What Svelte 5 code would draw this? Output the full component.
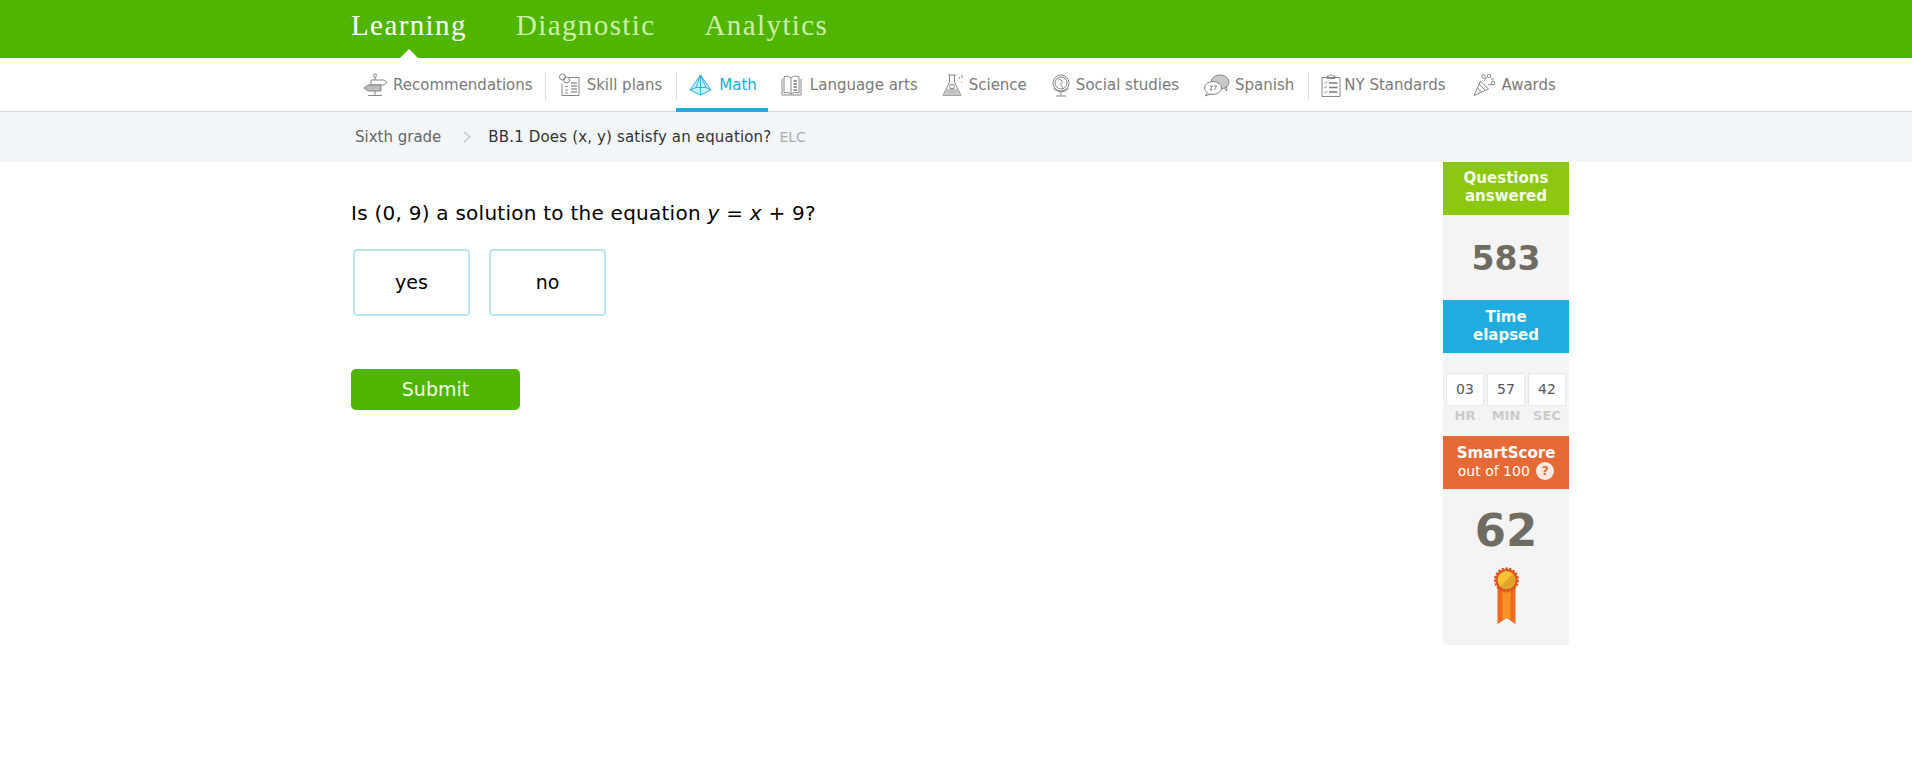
<script lang="ts">
	const tabs = [
		{ label: 'Learning', active: true },
		{ label: 'Diagnostic', active: false },
		{ label: 'Analytics', active: false }
	];

	const subjects = [
		{ id: 'rec', label: 'Recommendations', w: 26, divider: true },
		{ id: 'plans', label: 'Skill plans', w: 22, divider: true },
		{ id: 'math', label: 'Math', w: 23, active: true },
		{ id: 'lang', label: 'Language arts', w: 23 },
		{ id: 'sci', label: 'Science', w: 22 },
		{ id: 'soc', label: 'Social studies', w: 20 },
		{ id: 'spa', label: 'Spanish', w: 27, divider: true },
		{ id: 'ny', label: 'NY Standards', w: 20 },
		{ id: 'awd', label: 'Awards', w: 23 }
	];

	const timer = [
		{ value: '03', unit: 'HR' },
		{ value: '57', unit: 'MIN' },
		{ value: '42', unit: 'SEC' }
	];
</script>

{#snippet icon(id: string, w: number)}
	<svg class="icon" width={w} height="24" viewBox="0 0 {w} 24" fill="none" stroke="currentColor" stroke-width="0.9">
		{#if id === 'rec'}
			<circle cx="13" cy="2.5" r="1.6" />
			<path d="M13 4v3M13 17v5M6 22.5h14" />
			<path d="M9 7h13l3 2.5-3 2.5H9z" />
			<path d="M19 12H6l-4 3 4 3h13z" fill="#bdbdbd" />
		{:else if id === 'plans'}
			<circle cx="4.5" cy="4" r="3" />
			<circle cx="8.5" cy="7" r="3" />
			<path d="M11 4.500h10v18H4V11" />
			<path d="M7 13.500h3M7 17h3M7 20h3" />
			<path d="M13 10h6M13 13h6M13 16h6M13 19h6" stroke="#999" stroke-width="1.500" />
		{:else if id === 'math'}
			<path d="M11.500 2 22 17 11.500 22 1 17z" fill="#c9ecf8" />
			<path d="M11.500 2 11.500 22M11.500 2 7 14.500 1 17M7 14.500 17 14.500 22 17M11.500 2 17 14.500" />
		{:else if id === 'lang'}
			<path d="M2 6v16h19V6" />
			<path d="M4 4v16c3-1 5-.5 7 1V5C9 3 7 2.500 4 4z" />
			<path d="M11 5c2-2 5-2.500 8-1v16c-3-1-6-.5-8 1" />
			<path d="M13.500 8h3.500M13.500 11h3.500M13.500 14h3.500M13.500 17h3.500" stroke-width="1.300" />
		{:else if id === 'sci'}
			<path d="M6 2h8M7.500 2v7L1 22.500h18L12.500 9V2" />
			<path d="M4.500 16c3-1 8-1 11 0l3.500 6.500H1z" fill="#c4c4c4" stroke="none" />
			<circle cx="10" cy="13.500" r="2.300" />
			<path d="M17 4l1 2M20 2v3M19 9h1" />
		{:else if id === 'soc'}
			<circle cx="10" cy="10" r="8" />
			<circle cx="10" cy="10" r="6" />
			<path d="M6 5c1 2 4 1 5 3s-2 2-1 4 2 2 2 4M12 4c1 1 2 2 3 2" fill="none" />
			<path d="M2.500 15c3 5 12 5 15 0M10 19v3.500M5 23h10" />
		{:else if id === 'spa'}
			<ellipse cx="17" cy="9" rx="9" ry="7" fill="#c9c9c9" />
			<path d="M21 15l3 3-.5-5" />
			<ellipse cx="10" cy="15" rx="8.500" ry="6.500" fill="#fff" />
			<path d="M4 20l-1.500 3 5-2" fill="#fff" />
			<path d="M7 13h2.500L7 17h2.500M11 13h2.500L11.500 17" stroke-width=".9" />
		{:else if id === 'ny'}
			<path d="M1 4.500h18v19H1z" />
			<path d="M6 4.500V3h2.500l1.500-1.500 1.500 1.500H14v2.500H6z" />
			<path d="M3.500 9.500l1 1 1.500-2M3.500 14l1 1 1.500-2M3.500 19l1 1 1.500-2" stroke="#888" />
			<path d="M8 10h8.500M8 14.500h8.500M8 19h8.500" stroke-width="1.300" />
		{:else if id === 'awd'}
			<path d="M1 22.500 7.500 8l8 8z" />
			<path d="M4.500 15l4 4M6 11l6.500 6.500" />
			<circle cx="10.500" cy="3.500" r="1.800" />
			<circle cx="16" cy="3" r="1.800" />
			<circle cx="20" cy="10" r="1.800" />
			<path d="M11 8c2-1 1-3 3-3M15 12c2-1 3-1 4 .5M18 6h3" />
		{/if}
	</svg>
{/snippet}

<div class="page">
	<header class="topbar">
		<nav class="wrap tabs">
			{#each tabs as tab}
				<a class="tab" class:on={tab.active} href="#top">{tab.label}</a>
			{/each}
		</nav>
	</header>

	<nav class="subnav">
		<div class="wrap subjects">
			{#each subjects as s}
				<a class="subject subject-{s.id}" class:active={s.active} class:divided={s.divider} href="#top">
					{@render icon(s.id, s.w)}
					<span>{s.label}</span>
				</a>
			{/each}
		</div>
	</nav>

	<div class="crumbs">
		<div class="wrap crumb-row">
			<span class="crumb-grade">Sixth grade</span>
			<svg class="chevron" width="8" height="12" viewBox="0 0 8 12" fill="none" stroke="#bcc2c6" stroke-width="1.300"><path d="M1 1l6 5-6 5" /></svg>
			<span class="crumb-skill">BB.1 Does (x, y) satisfy an equation?</span>
			<span class="crumb-code">ELC</span>
		</div>
	</div>

	<main class="wrap content">
		<section class="question">
			<p class="prompt">Is (0, 9) a solution to the equation <i>y</i> = <i>x</i> + 9?</p>
			<div class="choices">
				<button class="choice">yes</button>
				<button class="choice">no</button>
			</div>
			<button class="submit">Submit</button>
		</section>

		<aside class="stats">
			<h2 class="stat-head green">Questions<br />answered</h2>
			<div class="count">583</div>
			<h2 class="stat-head blue">Time<br />elapsed</h2>
			<div class="timer">
				{#each timer as t}
					<div class="cell">
						<div class="digits">{t.value}</div>
						<div class="unit">{t.unit}</div>
					</div>
				{/each}
			</div>
			<h2 class="stat-head orange">
				SmartScore
				<span class="outof">out of 100 <span class="help">?</span></span>
			</h2>
			<div class="score">62</div>
			<div class="ribbon">
				<svg width="27" height="57" viewBox="0 0 27 57">
					<path d="M4.500 18h18v39l-9-6-9 6z" fill="#ee6a1f" />
					<path d="M9.500 18h8v35l-4-2.500-4 2.500z" fill="#f79226" />
					<circle cx="13.500" cy="13" r="11" fill="#d9541e" stroke="#d9541e" stroke-width="3" stroke-dasharray="2.300 1.300" />
					<circle cx="13.500" cy="13" r="9" fill="#f6c333" />
					<path d="M20 7a9 9 0 0 1-13 12.500z" fill="#e2a32c" />
				</svg>
			</div>
		</aside>
	</main>
</div>

<style>
	:global(body) {
		background: #fff;
	}

	.page {
		font-family: 'DejaVu Sans', Verdana, sans-serif;
		color: #000;
	}

	.wrap {
		box-sizing: border-box;
		width: 1226px;
		margin: 0 auto;
		padding-left: 8px;
	}

	.topbar {
		height: 58px;
		background: #50b500;
	}

	.tabs {
		display: flex;
		gap: 49px;
	}

	.tab {
		position: relative;
		height: 58px;
		line-height: 50px;
		font-family: 'Liberation Serif', serif;
		font-size: 29px;
		letter-spacing: 1.4px;
		color: #cdf0a8;
		text-decoration: none;
	}

	.tab.on {
		color: #fff;
	}

	.tab.on::after {
		content: '';
		position: absolute;
		left: 50%;
		bottom: 0;
		margin-left: -9px;
		border: 9px solid transparent;
		border-top: 0;
		border-bottom-color: #fff;
	}

	.subnav {
		height: 53px;
		border-bottom: 1px solid #d4d9dc;
		background: #fff;
	}

	.subjects {
		display: flex;
		padding-left: 19px;
	}

	.subject {
		position: relative;
		flex: none;
		display: flex;
		align-items: center;
		gap: 5px;
		height: 53px;
		font-size: 15px;
		white-space: nowrap;
		color: #7a7a7a;
		text-decoration: none;
		box-sizing: border-box;
		padding-right: 25px;
	}

	.subject.divided::after {
		content: '';
		position: absolute;
		right: 12px;
		top: 14px;
		height: 28px;
		width: 1px;
		background: #dcdcdc;
	}

	.subject.active {
		margin-left: -13px;
		padding: 0 11px 0 13px;
		margin-right: 14px;
		gap: 7px;
		color: #20abdc;
		border-bottom: 4px solid #20abdc;
		height: 54px;
	}

	.subject.active span,
	.subject.active .icon {
		margin-top: 4px;
	}

	.subject-plans {
		padding-right: 27px;
	}

	.subject-plans span {
		margin-left: 2px;
	}

	.subject-lang {
		margin-left: -2px;
		gap: 7px;
		padding-right: 24px;
	}

	.subject-sci,
	.subject-soc {
		padding-right: 24px;
	}

	.subject-spa {
		padding-right: 27px;
	}

	.subject-ny {
		gap: 3px;
		padding-right: 27px;
	}

	.subject-awd {
		gap: 6px;
	}

	.icon {
		flex: none;
	}

	.crumbs {
		height: 50px;
		background: #f3f6f9;
	}

	.crumb-row {
		display: flex;
		align-items: center;
		height: 50px;
		padding-left: 12px;
		font-size: 15px;
	}

	.crumb-grade {
		color: #666;
	}

	.chevron {
		margin: 0 17px 0 22px;
	}

	.crumb-skill {
		color: #333;
		letter-spacing: 0.16px;
	}

	.crumb-code {
		margin-left: 8px;
		font-size: 14px;
		color: #a9adb0;
	}

	.content {
		display: flex;
		justify-content: space-between;
		align-items: flex-start;
	}

	.prompt {
		margin: 38px 0 0;
		font-size: 20px;
		line-height: 26px;
		letter-spacing: 0.25px;
	}

	.choices {
		display: flex;
		gap: 19px;
		margin: 23px 0 0 2px;
	}

	.choice {
		width: 117px;
		height: 67px;
		padding: 0 0 2px;
		background: #fff;
		border: 2px solid #b8e6f1;
		border-radius: 4px;
		font: inherit;
		font-size: 19px;
		color: #000;
	}

	.submit {
		display: block;
		width: 169px;
		height: 41px;
		margin-top: 53px;
		padding: 0 0 2px;
		border: 0;
		border-radius: 5px;
		background: #50b500;
		font: inherit;
		font-size: 19px;
		color: #f1fbe6;
	}

	.stats {
		width: 126px;
		height: 483px;
		background: #f4f4f4;
		text-align: center;
	}

	.stat-head {
		margin: 0;
		font-size: 15px;
		line-height: 18px;
		font-weight: bold;
		color: #f4fbe9;
		padding: 7px 0;
		height: 53px;
		box-sizing: border-box;
	}

	.green {
		background: #8cc812;
	}

	.blue {
		background: #20abe1;
		padding-top: 8px;
	}

	.orange {
		background: #e56a35;
		color: #fff;
		font-size: 15px;
		padding-top: 8px;
	}

	.outof {
		display: block;
		font-weight: normal;
		font-size: 14px;
	}

	.help {
		display: inline-block;
		width: 18px;
		height: 18px;
		line-height: 18px;
		margin-left: 2px;
		border-radius: 50%;
		background: #fbe9e1;
		color: #e56a35;
		font-size: 12px;
		font-weight: bold;
		vertical-align: 1px;
	}

	.count {
		height: 85px;
		line-height: 87px;
		font-size: 33px;
		font-weight: bold;
		color: #6f6d63;
	}

	.timer {
		display: flex;
		justify-content: center;
		gap: 3px;
		height: 83px;
		padding-top: 20px;
		box-sizing: border-box;
	}

	.digits {
		box-sizing: border-box;
		width: 38px;
		height: 33px;
		line-height: 31px;
		background: #fff;
		border: 1px solid #e8e8e8;
		font-size: 14px;
		color: #555;
	}

	.unit {
		margin-top: 2px;
		font-size: 13px;
		font-weight: bold;
		color: #c9cbcc;
	}

	.score {
		height: 78px;
		line-height: 84px;
		font-size: 45px;
		font-weight: bold;
		color: #6f6d63;
	}

	.ribbon {
		display: flex;
		justify-content: center;
	}
</style>
